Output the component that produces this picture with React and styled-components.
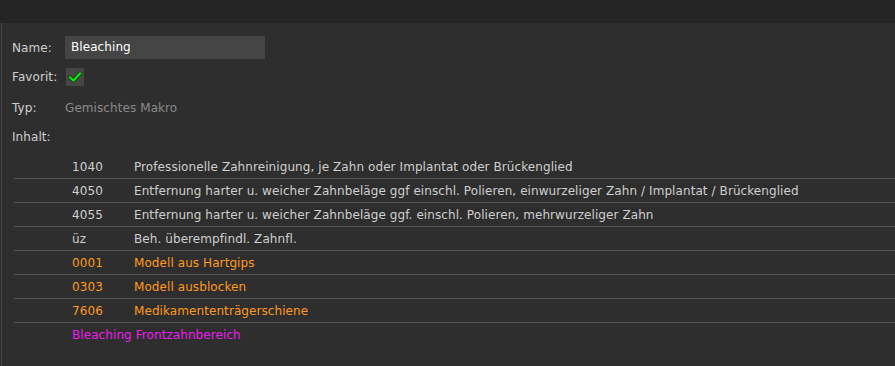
import React from "react"
import styled, { createGlobalStyle } from "styled-components"

const GlobalStyle = createGlobalStyle`
  html, body {
    margin: 0;
    padding: 0;
    background: #2d2d2d;
  }
  body {
    font-family: "DejaVu Sans", sans-serif;
    font-size: 12px;
    letter-spacing: 0.08px;
    color: #d2d2d2;
  }
`

const Page = styled.div`
  width: 895px;
  height: 366px;
  display: flex;
  flex-direction: column;
  overflow: hidden;
`

const TopBar = styled.div`
  height: 23px;
  flex: none;
  background: #252525;
`

const Panel = styled.div`
  flex: 1;
  display: flex;
  flex-direction: column;
  background: #2e2e2e;
  border-left: 1px solid #454545;
  margin-left: 1px;
  padding: 12px 0 0 10px;
`

const FieldRow = styled.div`
  display: flex;
  align-items: center;
  height: ${props => props.height}px;
`

const Label = styled.div`
  width: 52px;
  flex: none;
  color: #cfcfcf;
`

const NameInput = styled.div`
  width: 194px;
  height: 23px;
  line-height: 23px;
  padding-left: 6px;
  margin-left: 1px;
  background: #454545;
  color: #ffffff;
`

const CheckBox = styled.div`
  width: 18px;
  height: 18px;
  margin-left: 2px;
  background: #464646;
  display: flex;
  align-items: center;
  justify-content: center;
`

const TypeValue = styled.div`
  color: #8a8a8a;
  margin-left: 1px;
`

const Table = styled.div`
  display: flex;
  flex-direction: column;
  margin-left: 2px;
  margin-top: 4px;
`

const Row = styled.div`
  display: flex;
  align-items: center;
  height: 23px;
  border-bottom: 1px solid ${props => (props.last ? "transparent" : "#545454")};
  color: ${props => props.color};
`

const Code = styled.div`
  width: 62px;
  flex: none;
  padding-left: 58px;
`

const Desc = styled.div`
  white-space: nowrap;
`

const Note = styled.div`
  padding-left: 58px;
  white-space: nowrap;
`

const colors = {
  normal: "#cfcfcf",
  orange: "#ff9a1a",
  magenta: "#ee1cee",
}

const rows = [
  { code: "1040", text: "Professionelle Zahnreinigung, je Zahn oder Implantat oder Brückenglied", kind: "normal" },
  { code: "4050", text: "Entfernung harter u. weicher Zahnbeläge ggf einschl. Polieren, einwurzeliger Zahn / Implantat / Brückenglied", kind: "normal" },
  { code: "4055", text: "Entfernung harter u. weicher Zahnbeläge ggf. einschl. Polieren, mehrwurzeliger Zahn", kind: "normal" },
  { code: "üz", text: "Beh. überempfindl. Zahnfl.", kind: "normal" },
  { code: "0001", text: "Modell aus Hartgips", kind: "orange" },
  { code: "0303", text: "Modell ausblocken", kind: "orange" },
  { code: "7606", text: "Medikamententrägerschiene", kind: "orange" },
]

const Check = () => (
  <svg width="14" height="12" viewBox="0 0 14 12">
    <path d="M2 6.5 L5.5 9.5 L12 2.5" fill="none" stroke="#0a3a0a" strokeWidth="3.6" strokeLinecap="square" />
    <path d="M2 6.5 L5.5 9.5 L12 2.5" fill="none" stroke="#12e812" strokeWidth="2.2" strokeLinecap="square" />
  </svg>
)

export default function App() {
  return (
    <Page>
      <GlobalStyle />
      <TopBar />
      <Panel>
        <FieldRow height={25}>
          <Label>Name:</Label>
          <NameInput>Bleaching</NameInput>
        </FieldRow>
        <FieldRow height={33}>
          <Label>Favorit:</Label>
          <CheckBox>
            <Check />
          </CheckBox>
        </FieldRow>
        <FieldRow height={30}>
          <Label>Typ:</Label>
          <TypeValue>Gemischtes Makro</TypeValue>
        </FieldRow>
        <FieldRow height={28}>
          <Label>Inhalt:</Label>
        </FieldRow>
        <Table>
          {rows.map((r, i) => (
            <Row key={i} color={colors[r.kind]}>
              <Code>{r.code}</Code>
              <Desc>{r.text}</Desc>
            </Row>
          ))}
          <Row last color={colors.magenta}>
            <Note>Bleaching Frontzahnbereich</Note>
          </Row>
        </Table>
      </Panel>
    </Page>
  )
}
